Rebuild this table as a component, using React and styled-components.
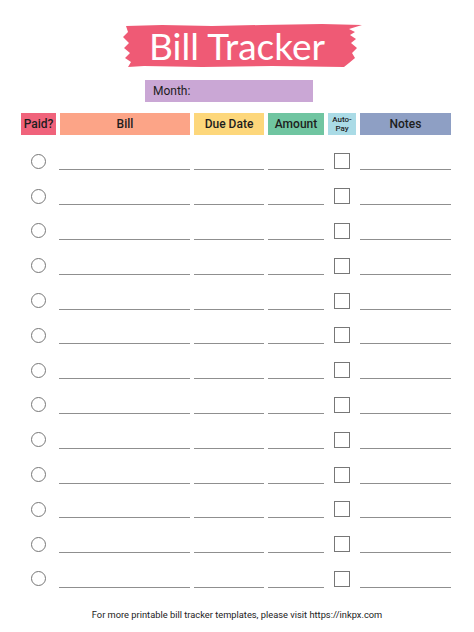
import styled, { createGlobalStyle } from 'styled-components';

/*
 * Global
 */
const GlobalStyle = createGlobalStyle`
  html, body {
    margin: 0;
    padding: 0;
    background: #fff;
  }
  body {
    font-family: Roboto, "Liberation Sans", Arial, sans-serif;
    color: #222;
  }
`;

/*
 * Styled Component
 */
const Page = styled.div`
  width: 474px;
  height: 632px;
  overflow: hidden;
  padding-top: 24px;
  box-sizing: border-box;
`;

const TitleRow = styled.div`
  display: flex;
  justify-content: center;
`;

const Brush = styled.div`
  position: relative;
  width: 240px;
  height: 44px;
  margin-left: 10px;
`;

const BrushShape = styled.svg`
  position: absolute;
  left: 0;
  top: 0;
  width: 240px;
  height: 44px;
`;

const Title = styled.h1`
  position: relative;
  margin: 0;
  padding-right: 10px;
  font-family: Lato, "Open Sans", sans-serif;
  font-weight: 400;
  font-size: 37px;
  line-height: 44px;
  color: #fff;
  text-align: center;
`;

const MonthBar = styled.div`
  width: 168px;
  height: 22px;
  margin: 12px 0 0 145px;
  padding-left: 8px;
  box-sizing: border-box;
  background: #caa7d5;
  font-size: 12px;
  font-weight: 400;
  line-height: 22px;
  color: #1d1d1d;
`;

const Grid = styled.div`
  display: grid;
  grid-template-columns: 35px 130px 70px 56px 28px 91px;
  column-gap: 4px;
  margin-left: 21px;
`;

const Header = styled(Grid)`
  margin-top: 11px;
  height: 22px;
`;

const HeadCell = styled.div`
  display: flex;
  align-items: center;
  justify-content: center;
  background: ${(p) => p.$bg};
  font-size: ${(p) => (p.$small ? '8px' : '12px')};
  line-height: ${(p) => (p.$small ? '9px' : '22px')};
  font-weight: 500;
  text-align: center;
  color: #1d1d1d;
`;

const Rows = styled.div`
  margin-top: 9px;
`;

const Row = styled(Grid)`
  height: 34.8px;
  align-items: center;
`;

const Cell = styled.div`
  display: flex;
  justify-content: center;
  align-items: center;
`;

const Circle = styled.span`
  width: 13px;
  height: 13px;
  border: 1px solid #777;
  border-radius: 50%;
`;

const Check = styled.span`
  width: 14px;
  height: 14px;
  border: 1px solid #777;
  margin-left: -1px;
`;

const Line = styled.div`
  height: 18px;
  margin-left: ${(p) => (p.$shift ? '-1px' : '0')};
  border-bottom: 1px solid #8f8f8f;
  box-sizing: border-box;
`;

const Footer = styled.div`
  margin-top: 13px;
  font-size: 9.3px;
  line-height: 12px;
  text-align: center;
  color: #222;
`;

const heads = [
  { label: 'Paid?', bg: '#f0637b' },
  { label: 'Bill', bg: '#fca487' },
  { label: 'Due Date', bg: '#fdd77b' },
  { label: 'Amount', bg: '#70c5a1' },
  { label: 'Auto-Pay', bg: '#aadbe6', small: true },
  { label: 'Notes', bg: '#8e9fc4' },
];

const rows = Array.from({ length: 13 }, (_, i) => i);

const App = () => {
  return (
    <Page>
      <GlobalStyle />
      <TitleRow>
        <Brush>
          <BrushShape viewBox="0 0 240 44" preserveAspectRatio="none">
            <path
              fill="#ef5a75"
              d="M4 2 L40 1 L90 2 L140 1 L200 0 L240 1 L227 5 L233 8 L228 11 L234 15 L229 19 L235 24 L230 29 L233 34 L227 39 L222 43 L150 42 L80 43 L22 42 L6 43 L9 38 L3 34 L8 29 L2 24 L7 19 L1 13 L6 8 Z"
            />
          </BrushShape>
          <Title>Bill Tracker</Title>
        </Brush>
      </TitleRow>

      <MonthBar>Month:</MonthBar>

      <Header>
        {heads.map((h) => (
          <HeadCell key={h.label} $bg={h.bg} $small={h.small}>
            {h.small ? (
              <span>
                Auto-
                <br />
                Pay
              </span>
            ) : (
              h.label
            )}
          </HeadCell>
        ))}
      </Header>

      <Rows>
        {rows.map((r) => (
          <Row key={r}>
            <Cell>
              <Circle />
            </Cell>
            <Line $shift />
            <Line />
            <Line />
            <Cell>
              <Check />
            </Cell>
            <Line />
          </Row>
        ))}
      </Rows>

      <Footer>For more printable bill tracker templates, please visit https://inkpx.com</Footer>
    </Page>
  );
};

export default App;
